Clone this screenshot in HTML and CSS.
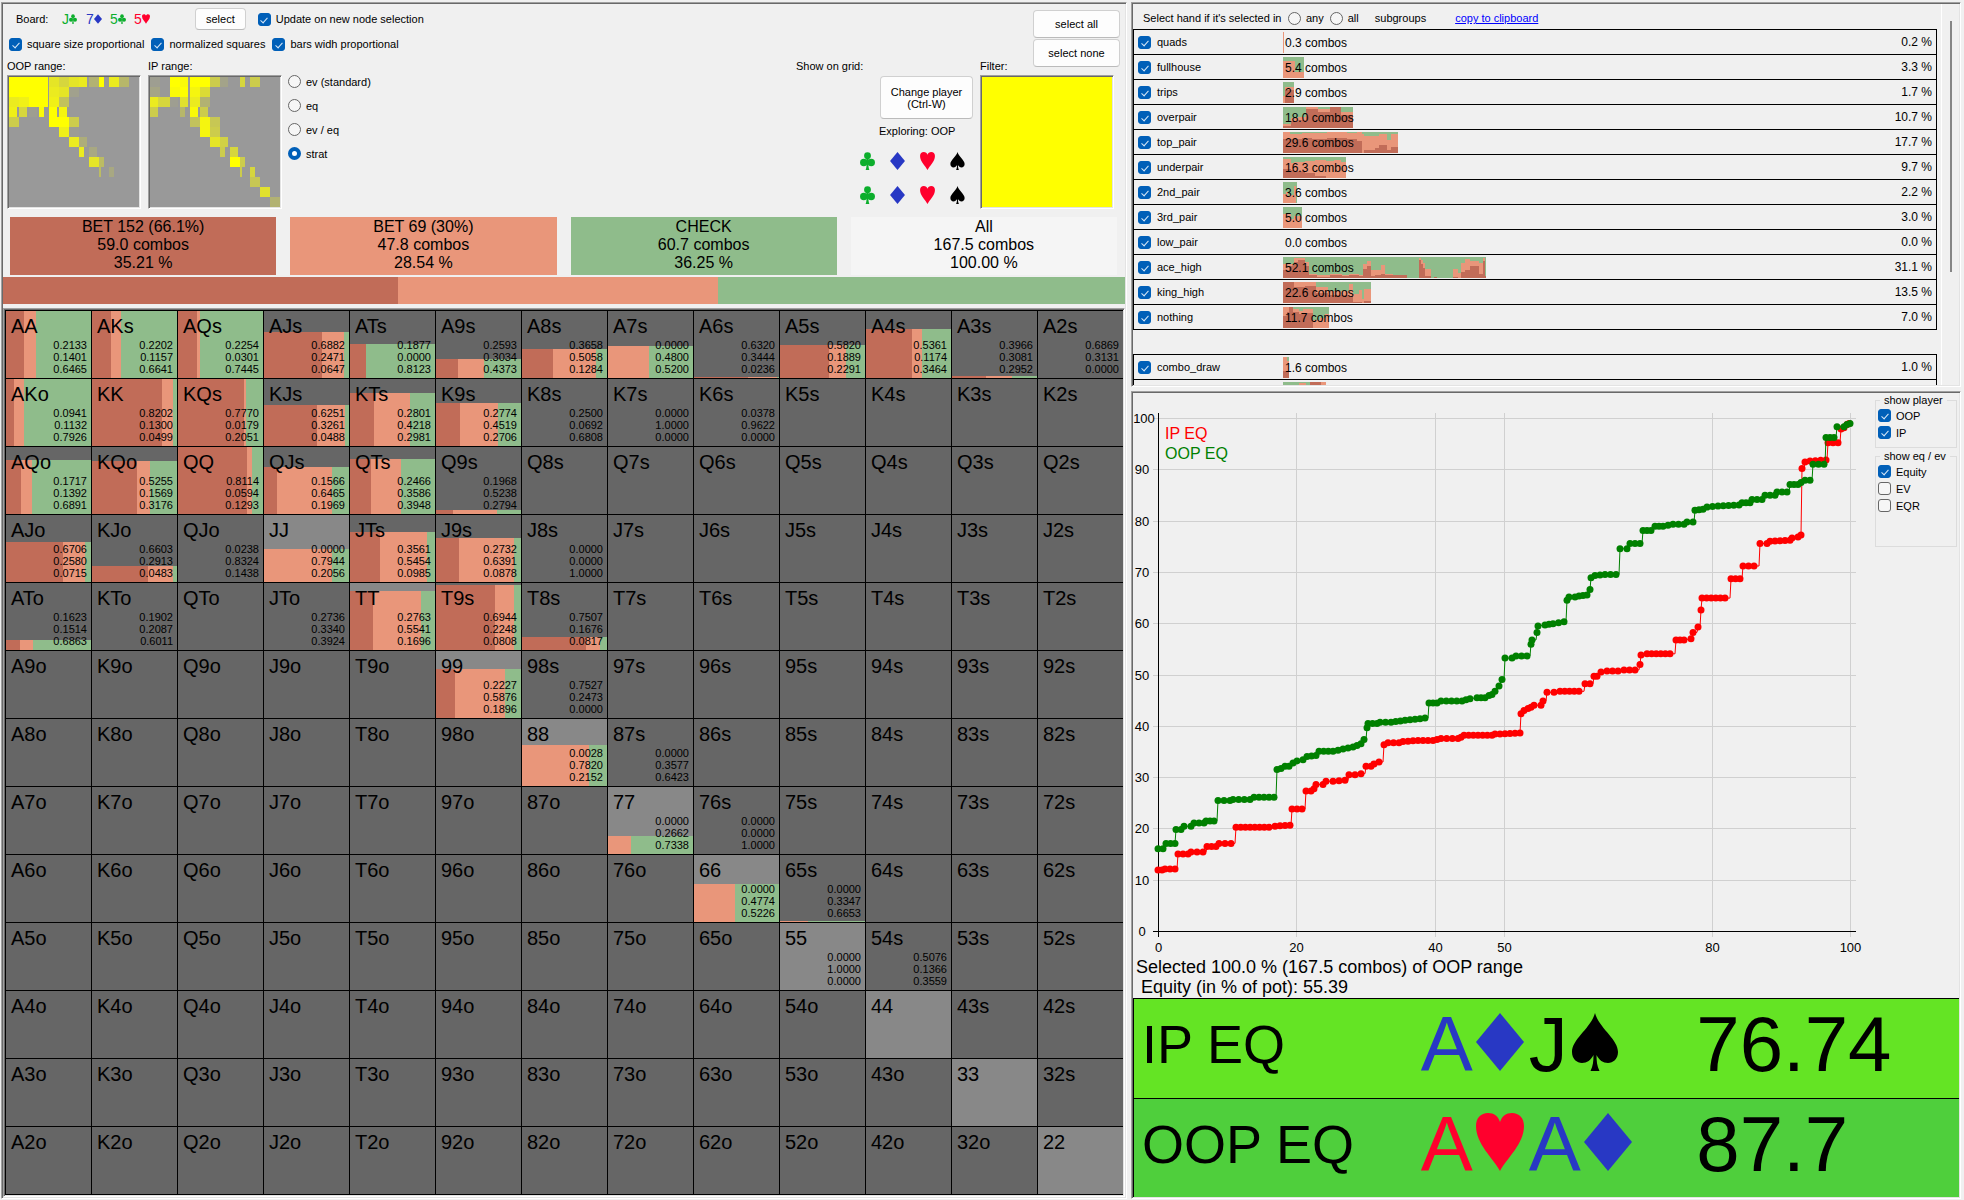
FILE: index.html
```html
<!DOCTYPE html>
<html lang="en">
<head>
<meta charset="utf-8">
<title>Range explorer</title>
<link rel="stylesheet" href="styles.css">
</head>
<body>
<svg class="symbols" aria-hidden="true">
  <symbol id="diamond" viewBox="0 0 48 58"><path d="M24 0L48 29L24 58L0 29Z"/></symbol>
  <symbol id="heart" viewBox="0 0 48 58"><path d="M24 58C17 45 0 31 0 13C0 5 5 0 12 0C18 0 22 3 24 9C26 3 30 0 36 0C43 0 48 5 48 13C48 31 31 45 24 58Z"/></symbol>
  <symbol id="spade" viewBox="0 0 48 58"><path d="M24 0C28 15 47 26 47 39C47 46 42 50 37 50C32 50 28 47 25.500 42C25.500 48 26 53 28.500 58H19.500C22 53 22.500 48 22.500 42C20 47 16 50 11 50C6 50 1 46 1 39C1 26 20 15 24 0Z"/></symbol>
  <symbol id="club" viewBox="0 0 48 58"><circle cx="24" cy="12" r="11"/><circle cx="12" cy="34" r="12"/><circle cx="36" cy="34" r="12"/><path d="M20 20H28L27 34C27 44 27 51 30 58H18C21 51 21 44 21 34Z"/></symbol>
</svg>

<main class="app">
  <section class="panel explorer">
    <div class="controls">
      <div class="setup">
        <div class="row board">
          <span class="board-label">Board:</span>
          <span class="cards">
            <span class="card club">J<svg><use href="#club"/></svg></span>
            <span class="card diamond">7<svg><use href="#diamond"/></svg></span>
            <span class="card club">5<svg><use href="#club"/></svg></span>
            <span class="card heart">5<svg><use href="#heart"/></svg></span>
          </span>
          <button type="button" class="btn">select</button>
          <label class="check"><input type="checkbox" checked>Update on new node selection</label>
        </div>
        <div class="row options">
          <label class="check"><input type="checkbox" checked>square size proportional</label>
          <label class="check"><input type="checkbox" checked>normalized squares</label>
          <label class="check"><input type="checkbox" checked>bars widh proportional</label>
        </div>
        <div class="ranges">
          <div class="range"><span>OOP range:</span><svg class="sunken mini" id="oop-range" viewBox="0 0 130 130"></svg></div>
          <div class="range"><span>IP range:</span><svg class="sunken mini" id="ip-range" viewBox="0 0 130 130"></svg></div>
          <div class="modes">
            <label class="check"><input type="radio" name="mode">ev (standard)</label>
            <label class="check"><input type="radio" name="mode">eq</label>
            <label class="check"><input type="radio" name="mode">ev / eq</label>
            <label class="check"><input type="radio" name="mode" checked>strat</label>
          </div>
        </div>
      </div>
      <div class="view">
        <div class="player">
          <span>Show on grid:</span>
          <button type="button" class="btn btn-player">Change player<br>(Ctrl-W)</button>
          <span class="exploring">Exploring: OOP</span>
          <div class="suits">
            <button type="button" class="club" aria-label="First card clubs"><svg><use href="#club"/></svg></button>
            <button type="button" class="diamond" aria-label="First card diamonds"><svg><use href="#diamond"/></svg></button>
            <button type="button" class="heart" aria-label="First card hearts"><svg><use href="#heart"/></svg></button>
            <button type="button" class="spade" aria-label="First card spades"><svg><use href="#spade"/></svg></button>
            <button type="button" class="club" aria-label="Second card clubs"><svg><use href="#club"/></svg></button>
            <button type="button" class="diamond" aria-label="Second card diamonds"><svg><use href="#diamond"/></svg></button>
            <button type="button" class="heart" aria-label="Second card hearts"><svg><use href="#heart"/></svg></button>
            <button type="button" class="spade" aria-label="Second card spades"><svg><use href="#spade"/></svg></button>
          </div>
        </div>
        <div class="filter">
          <div class="filter-head">
            <span>Filter:</span>
            <div class="filter-buttons">
              <button type="button" class="btn">select all</button>
              <button type="button" class="btn">select none</button>
            </div>
          </div>
          <div class="sunken filter-box"></div>
        </div>
      </div>
    </div>

    <div class="actions">
      <div class="action bet-big">BET 152 (66.1%)<br>59.0 combos<br>35.21 %</div>
      <div class="action bet-small">BET 69 (30%)<br>47.8 combos<br>28.54 %</div>
      <div class="action pass">CHECK<br>60.7 combos<br>36.25 %</div>
      <div class="action all">All<br>167.5 combos<br>100.00 %</div>
    </div>
    <div class="split">
      <div class="bet-big" style="width:35.21%"></div>
      <div class="bet-small" style="width:28.54%"></div>
      <div class="pass" style="width:36.25%"></div>
    </div>
    <div class="sunken matrix-frame"><table class="matrix"><tbody id="matrix"></tbody></table></div>
  </section>

  <div class="side">
    <section class="panel hands">
      <div class="hands-body">
        <div class="hands-head">
          <span>Select hand if it's selected in</span>
          <label class="check"><input type="radio" name="sub">any</label>
          <label class="check"><input type="radio" name="sub">all</label>
          <span class="subgroups">subgroups</span>
          <a href="#copy">copy to clipboard</a>
        </div>
        <table class="groups"><tbody id="made"></tbody></table>
        <table class="groups draws"><tbody id="draws"></tbody></table>
      </div>
      <div class="scrollbar"><div class="thumb"></div></div>
    </section>

    <section class="panel equity">
      <div class="chart-row">
        <svg id="chart" class="chart" viewBox="0 0 740 564" role="img" aria-label="Equity distribution"></svg>
        <div class="toggles">
          <fieldset>
            <legend>show player</legend>
            <label class="check"><input type="checkbox" checked>OOP</label>
            <label class="check"><input type="checkbox" checked>IP</label>
          </fieldset>
          <fieldset class="tall">
            <legend>show eq / ev</legend>
            <label class="check"><input type="checkbox" checked>Equity</label>
            <label class="check"><input type="checkbox">EV</label>
            <label class="check"><input type="checkbox">EQR</label>
          </fieldset>
        </div>
      </div>
      <div class="summary">
        <div>Selected 100.0 % (167.5 combos) of OOP range</div>
        <div class="summary-eq">Equity (in % of pot): 55.39</div>
      </div>
      <div class="banner ip">
        <span class="who">IP EQ</span>
        <span class="hole"><span class="diamond">A<svg><use href="#diamond"/></svg></span><span class="spade">J<svg><use href="#spade"/></svg></span></span>
        <span class="num">76.74</span>
      </div>
      <div class="banner oop">
        <span class="who">OOP EQ</span>
        <span class="hole"><span class="heart">A<svg><use href="#heart"/></svg></span><span class="diamond">A<svg><use href="#diamond"/></svg></span></span>
        <span class="num">87.7</span>
      </div>
    </section>
  </div>
</main>
<script src="app.js"></script>
</body>
</html>
```

FILE: styles.css
```css
:root {
  --face: #f0f0f0;
  --big: #c16c58;
  --small: #e9967a;
  --pass: #8fbc8b;
  --accent: #005fb8;
}

* { box-sizing: border-box; }

body {
  margin: 0;
  background: var(--face);
  color: #000;
  font: 11px/12px "Liberation Sans", Arial, sans-serif;
}

button, input { font: inherit; color: inherit; margin: 0; }

.symbols { position: absolute; width: 0; height: 0; }

.club { color: #0cae2c; }
.diamond { color: #2838c4; }
.heart { color: #ff002d; }
.spade { color: #000; }
.club svg, .diamond svg, .heart svg, .spade svg { fill: currentColor; }

.bet-big { background: var(--big); }
.bet-small { background: var(--small); }
.pass { background: var(--pass); }

.app {
  display: grid;
  grid-template-columns: 1126fr 830fr;
  gap: 4px;
  min-height: 100vh;
  padding: 2px 3px 1px 1px;
}

.panel, .sunken {
  border: 1px solid;
  border-color: #a0a0a0 #fff #fff #a0a0a0;
  box-shadow: inset 1px 1px #696969, inset -1px -1px #e3e3e3;
  padding: 1px;
}

/* form controls */
.check { display: flex; align-items: center; gap: 5px; white-space: nowrap; }

input[type="checkbox"], input[type="radio"] {
  appearance: none;
  flex: none;
  display: grid;
  place-items: center;
  width: 13px;
  height: 13px;
  border: 1px solid #666;
  border-radius: 3px;
  background: #f6f6f6;
}
input[type="checkbox"]:checked { background: var(--accent); border-color: var(--accent); }
input[type="checkbox"]:checked::after {
  content: "";
  width: 3px;
  height: 6px;
  border: solid #d8e8f8;
  border-width: 0 1px 1px 0;
  transform: rotate(42deg);
}
input[type="radio"] { border-radius: 50%; }
input[type="radio"]:checked { border: 4px solid var(--accent); background: #fff; }

.btn {
  border: 1px solid #d0d0d0;
  border-bottom-color: #bbb;
  border-radius: 4px;
  background: #fdfdfd;
  padding: 0 10px;
}

/* left side */
.explorer { display: flex; flex-direction: column; }

.controls {
  display: flex;
  justify-content: space-between;
  padding: 4px 5px 5px 4px;
}

.row { display: flex; align-items: center; }
.board { height: 22px; padding-left: 9px; }
.board-label { width: 46px; }
.cards { display: flex; margin-right: 37px; }
.card { display: flex; align-items: center; width: 24px; font-size: 14px; }
.card svg { width: 8px; height: 10px; }
.board .btn { height: 22px; margin-right: 12px; }

.options { gap: 7px; margin: 7px 0 9px; height: 14px; padding-left: 2px; }

.ranges { display: flex; gap: 6px; }
.range { display: flex; flex-direction: column; gap: 3px; }
.range + .range { margin-left: 1px; }
.mini { width: 134px; height: 134px; padding: 1px; background: #999; }
.modes { display: flex; flex-direction: column; gap: 11px; padding-top: 15px; }

.view { display: flex; gap: 7px; }
.player { display: flex; flex-direction: column; width: 177px; padding-top: 52px; }
.btn-player { align-self: flex-end; width: 93px; height: 43px; margin: 4px 0 6px; padding: 0; }
.exploring { padding-left: 83px; }
.suits {
  display: grid;
  grid-template-columns: repeat(4, 30px);
  grid-auto-rows: 34px;
  justify-content: end;
  margin-top: 7px;
  padding-right: 1px;
}
.suits button { border: 0; background: none; padding: 0; display: grid; place-items: center; }
.suits svg { width: 15px; height: 18px; }

.filter { width: 140px; padding-top: 2px; }
.filter-head { display: flex; justify-content: space-between; height: 62px; margin-bottom: 3px; }
.filter-head > span { align-self: flex-end; }
.filter-buttons { display: flex; flex-direction: column; gap: 1px; }
.filter-buttons .btn { width: 87px; height: 28px; }
.filter-box { width: 134px; height: 134px; background: #ff0; }

.actions {
  display: grid;
  grid-template-columns: repeat(4, 1fr);
  gap: 14px;
  padding: 0 8px 2px 7px;
}
.action { padding-top: 1px; height: 58px; text-align: center; font-size: 16px; line-height: 18px; }
.all { background: #f5f5f5; }

.split { display: flex; height: 27px; margin-bottom: 4px; }

.matrix-frame { flex: 1; }
.matrix {
  width: 100%;
  table-layout: fixed;
  border-spacing: 0;
  border-bottom: 1px solid #000;
}
.matrix td { padding: 0; border: solid #000; border-width: 1px 0 0 1px; }
.cell {
  display: flex;
  flex-direction: column;
  justify-content: space-between;
  height: 67px;
  padding: 4px 4px 3px 5px;
  background-color: #666;
}
.cell.pair { background-color: #888; }
.cell.played {
  background-image: linear-gradient(90deg, var(--big) var(--a), var(--small) var(--a), var(--small) var(--b), var(--pass) var(--b));
  background-position: bottom;
  background-size: 100% var(--h);
  background-repeat: no-repeat;
}
.hand { font-size: 20px; line-height: 23px; }
.freq { text-align: right; }

/* right side */
.side { display: flex; flex-direction: column; gap: 4px; }

.hands { display: flex; height: 385px; }
.hands-body { flex: 1; overflow: hidden; padding-right: 4px; border-right: 1px solid #fff; }
.hands-head { display: flex; align-items: center; height: 25px; padding: 3px 0 0 10px; }
.hands-head .check { margin-right: 6px; }
.hands-head > span:first-child { width: 145px; white-space: nowrap; }
.subgroups { margin: 0 29px 0 10px; }
.hands-head a { color: #00f; }

.groups {
  width: 100%;
  table-layout: fixed;
  border-spacing: 0;
  border: solid #000;
  border-width: 0 1px 1px;
}
.groups td { height: 25px; padding: 0; border-top: 1px solid #000; }
.groups .name { width: 149px; padding-left: 4px; }
.groups .name .check { gap: 6px; }
.groups .share { width: 80px; padding-right: 4px; text-align: right; font-size: 12px; }
.bar { display: grid; align-items: center; font-size: 12px; height: 22px; }
.bar svg, .bar span { grid-area: 1 / 1; }
.bar span { padding: 2px 0 0 2px; }
.draws { margin-top: 24px; }

.scrollbar { width: 17px; padding: 17px 0 0 8px; }
.thumb { width: 2px; height: 251px; background: #858585; }

.equity { flex: 1; display: flex; flex-direction: column; }
.chart-row { display: flex; }
.chart { flex: 1; min-width: 0; display: block; }
.chart text { font-size: 13px; text-anchor: middle; }
.chart .key { font-size: 16px; text-anchor: start; }

.toggles { width: 86px; padding: 1px 2px; }
fieldset {
  margin: 0 0 2px;
  padding: 1px 2px 0;
  height: 54px;
  border: 1px solid #dcdcdc;
}
fieldset.tall { height: 97px; }
legend { margin-left: 2px; padding: 0 4px; }
fieldset .check { height: 17px; }

.summary { padding: 0 3px 1px; font-size: 18px; line-height: 20px; }
.summary-eq { padding-left: 5px; }

.banner {
  flex: 1;
  display: grid;
  grid-template-columns: 279fr 276fr 263fr;
  align-items: center;
  padding: 0 0 8px 8px;
  border: solid #000;
  border-width: 1px 0 0 1px;
  font-size: 78px;
  line-height: 80px;
}
.ip { background: #64e424; }
.oop { background: #4fcf3c; }
.who { font-size: 54px; }
.hole svg { width: 48px; height: 58px; margin: 0 5px 0 3px; }
```

FILE: app.js
```js
const svgNS = "http://www.w3.org/2000/svg";
function draw(parent, tag, attrs, text) {
  const el = document.createElementNS(svgNS, tag);
  for (const key in attrs) el.setAttribute(key, attrs[key]);
  if (text !== undefined) el.textContent = text;
  parent.appendChild(el);
  return el;
}

/* Hand matrix: [bet big, bet small, check, fill height in px] */
const strategy = {
  AA: ["0.2133", "0.1401", "0.6465", 67], AKs: ["0.2202", "0.1157", "0.6641", 67], AQs: ["0.2254", "0.0301", "0.7445", 67],
  AJs: ["0.6882", "0.2471", "0.0647", 46], ATs: ["0.1877", "0.0000", "0.8123", 34], A9s: ["0.2593", "0.3034", "0.4373", 19],
  A8s: ["0.3658", "0.5058", "0.1284", 29], A7s: ["0.0000", "0.4800", "0.5200", 32], A6s: ["0.6320", "0.3444", "0.0236", 1],
  A5s: ["0.5820", "0.1889", "0.2291", 33], A4s: ["0.5361", "0.1174", "0.3464", 49], A3s: ["0.3966", "0.3081", "0.2952", 2],
  A2s: ["0.6869", "0.3131", "0.0000", 0],
  AKo: ["0.0941", "0.1132", "0.7926", 67], KK: ["0.8202", "0.1300", "0.0499", 67], KQs: ["0.7770", "0.0179", "0.2051", 67],
  KJs: ["0.6251", "0.3261", "0.0488", 41], KTs: ["0.2801", "0.4218", "0.2981", 53], K9s: ["0.2774", "0.4519", "0.2706", 43],
  K8s: ["0.2500", "0.0692", "0.6808", 0], K7s: ["0.0000", "1.0000", "0.0000", 0], K6s: ["0.0378", "0.9622", "0.0000", 0],
  AQo: ["0.1717", "0.1392", "0.6891", 54], KQo: ["0.5255", "0.1569", "0.3176", 53], QQ: ["0.8114", "0.0594", "0.1293", 67],
  QJs: ["0.1566", "0.6465", "0.1969", 47], QTs: ["0.2466", "0.3586", "0.3948", 55], Q9s: ["0.1968", "0.5238", "0.2794", 4],
  AJo: ["0.6706", "0.2580", "0.0715", 40], KJo: ["0.6603", "0.2913", "0.0483", 16], QJo: ["0.0238", "0.8324", "0.1438", 0],
  JJ: ["0.0000", "0.7944", "0.2056", 33], JTs: ["0.3561", "0.5454", "0.0985", 50], J9s: ["0.2732", "0.6391", "0.0878", 44],
  J8s: ["0.0000", "0.0000", "1.0000", 0],
  ATo: ["0.1623", "0.1514", "0.6863", 10], KTo: ["0.1902", "0.2087", "0.6011", 0], JTo: ["0.2736", "0.3340", "0.3924", 0],
  TT: ["0.2763", "0.5541", "0.1696", 59], T9s: ["0.6944", "0.2248", "0.0808", 65], T8s: ["0.7507", "0.1676", "0.0817", 13],
  "99": ["0.2227", "0.5876", "0.1896", 49], "98s": ["0.7527", "0.2473", "0.0000", 0],
  "88": ["0.0028", "0.7820", "0.2152", 41], "87s": ["0.0000", "0.3577", "0.6423", 0],
  "77": ["0.0000", "0.2662", "0.7338", 18], "76s": ["0.0000", "0.0000", "1.0000", 0],
  "66": ["0.0000", "0.4774", "0.5226", 38], "65s": ["0.0000", "0.3347", "0.6653", 1],
  "55": ["0.0000", "1.0000", "0.0000", 0], "54s": ["0.5076", "0.1366", "0.3559", 0]
};
const ranks = "AKQJT98765432";
document.getElementById("matrix").innerHTML = [...ranks].map((r, i) =>
  "<tr>" + [...ranks].map((c, j) => {
    const name = i === j ? r + c : i < j ? r + c + "s" : c + r + "o";
    const s = strategy[name];
    let cls = "cell" + (i === j ? " pair" : "");
    let style = "";
    if (s && s[3]) {
      const a = s[0] * 100, b = a + s[1] * 100;
      cls += " played";
      style = ` style="--a:${a.toFixed(2)}%;--b:${b.toFixed(2)}%;--h:${s[3]}px"`;
    }
    const freq = s ? `<div class="freq">${s.slice(0, 3).join("<br>")}</div>` : "";
    return `<td><div class="${cls}"${style}><div class="hand">${name}</div>${freq}</div></td>`;
  }).join("") + "</tr>").join("");

/* Range thumbnails: per row, [x, width, weight] */
const ranges = {
  "oop-range": [
    [[0, 39, 1], [40, 10, .75], [50, 10, .6], [60, 10, .75], [70, 8, .8], [80, 10, .25], [90, 5, 1], [100, 10, .8], [110, 10, .3]],
    [[0, 39, 1], [40, 10, .8], [50, 10, .75], [60, 10, .08]],
    [[0, 10, .8], [10, 10, .85], [20, 19, 1], [40, 10, .85], [50, 10, .4]],
    [[0, 8, .85], [10, 8, .6], [20, 8, .05], [30, 5, .95], [40, 8, 1], [50, 8, .9]],
    [[0, 10, .5], [40, 20, 1], [60, 10, .5]],
    [[50, 10, .85], [60, 10, .03]],
    [[60, 10, .8], [70, 8, .2]],
    [[70, 5, .8], [80, 8, .15]],
    [[80, 10, .75], [90, 5, .35]],
    [[90, 2, .35], [100, 5, .15]]
  ],
  "ip-range": [
    [[0, 10, .05], [20, 10, 1], [30, 8, .95], [40, 20, 1], [60, 10, .5], [70, 8, .1], [90, 5, .6], [100, 10, .5]],
    [[0, 10, .12], [20, 10, .95], [30, 8, 1], [40, 10, .9], [50, 10, .65]],
    [[0, 8, .8], [8, 12, .6], [20, 8, .05], [30, 8, .7], [40, 10, .8], [50, 10, .25]],
    [[0, 8, .5], [30, 5, .3], [40, 8, .95], [50, 8, .5]],
    [[40, 10, .4], [50, 10, .9], [60, 10, .45]],
    [[50, 10, .9], [60, 10, .5]],
    [[60, 10, .75], [70, 8, .55]],
    [[70, 5, .5], [80, 8, .6]],
    [[80, 10, 1], [90, 5, .5]],
    [[90, 2, .5], [100, 5, .6]],
    [[100, 10, .45]],
    [[110, 10, .7]],
    [[120, 10, .25]]
  ]
};
for (const id in ranges) {
  const svg = document.getElementById(id);
  ranges[id].forEach((row, i) => row.forEach(([x, w, o]) =>
    draw(svg, "rect", { x, y: i * 10, width: w, height: 10, fill: "#ff0", "fill-opacity": o, "shape-rendering": "crispEdges" })));
}

/* Hand groups: name, combos, share, slices of [width, bet big height, total bet height] */
const made = [
  ["quads", "0.3", "0.2", [[1, 0, 21]]],
  ["fullhouse", "5.4", "3.3", [[12, 0, 17], [9, 0, 6]]],
  ["trips", "2.9", "1.7", [[2, 0, 7], [9, 13, 16]]],
  ["overpair", "18.0", "10.7", [[8, 2, 4], [7, 7, 10], [8, 8, 11], [12, 19, 21], [12, 16, 19], [11, 21, 21], [12, 13, 16]]],
  ["top_pair", "29.6", "17.7", [[7, 14, 21], [12, 14, 19], [10, 15, 20], [15, 14, 20], [20, 15, 21], [10, 14, 20], [5, 12, 21], [2, 0, 19], [11, 3, 17], [4, 5, 17], [8, 8, 19], [4, 3, 13], [7, 6, 19]]],
  ["underpair", "16.3", "9.7", [[8, 9, 19], [3, 8, 15], [11, 7, 16], [10, 5, 17], [11, 2, 18], [8, 0, 17], [7, 0, 18], [5, 0, 16]]],
  ["2nd_pair", "3.6", "2.2", [[3, 0, 9], [2, 0, 11], [1, 0, 7], [5, 0, 8], [2, 0, 17], [1, 0, 0]]],
  ["3rd_pair", "5.0", "3.0", [[8, 0, 14], [3, 0, 9], [8, 0, 12]]],
  ["low_pair", "0.0", "0.0", []],
  ["ace_high", "52.1", "31.1", [[6, 8, 14], [5, 12, 14], [4, 16, 20], [7, 18, 20], [4, 12, 16], [8, 3, 4], [13, 1, 3], [12, 3, 4], [7, 2, 3], [10, 3, 4], [4, 2, 3], [4, 9, 14], [4, 12, 17], [4, 2, 8], [6, 3, 8], [4, 4, 13], [8, 3, 4], [14, 3, 3], [12, 0, 0], [2, 18, 20], [2, 14, 18], [2, 10, 15], [6, 2, 9], [3, 0, 0], [3, 1, 1], [16, 0, 0], [5, 1, 9], [3, 0, 5], [4, 6, 15], [5, 8, 19], [9, 12, 17], [4, 4, 15], [2, 17, 20], [1, 2, 2]]],
  ["king_high", "22.6", "13.5", [[11, 21, 21], [11, 16, 21], [11, 17, 21], [12, 10, 16], [21, 8, 12], [4, 7, 19], [6, 1, 9], [3, 1, 13], [2, 0, 4], [7, 2, 14]]],
  ["nothing", "11.7", "7.0", [[4, 12, 21], [2, 16, 21], [4, 21, 21], [6, 16, 19], [4, 14, 17], [10, 15, 19], [7, 0, 8], [5, 0, 10], [4, 0, 14]]]
];
const draws = [
  ["combo_draw", "1.6", "1.0", [[4, 7, 21], [2, 7, 17]]]
];
/* the next group only peeks in at the bottom of the list */
const peek = [[16, 0, 17], [7, 0, 20], [4, 0, 18], [11, 21, 21], [5, 18, 21]];

function bar(slices) {
  let x = 0, rects = "";
  for (const [w, big, bets] of slices) {
    rects += `<rect x="${x}" y="${21 - bets}" width="${w}" height="${bets}" fill="#e9967a"/><rect x="${x}" y="${21 - big}" width="${w}" height="${big}" fill="#c16c58"/>`;
    x += w;
  }
  return `<svg width="${x}" height="21" shape-rendering="crispEdges"><rect width="${x}" height="21" fill="#8fbc8b"/>${rects}</svg>`;
}
function groupRow([name, combos, share, slices]) {
  return `<tr><td class="name"><label class="check"><input type="checkbox" checked>${name}</label></td>` +
    `<td><div class="bar">${bar(slices)}<span>${combos} combos</span></div></td><td class="share">${share} %</td></tr>`;
}
document.getElementById("made").innerHTML = made.map(groupRow).join("");
document.getElementById("draws").innerHTML = draws.map(groupRow).join("") +
  `<tr><td class="name"></td><td><div class="bar">${bar(peek)}</div></td><td class="share"></td></tr>`;

/* Equity chart */
const chart = document.getElementById("chart");
const px = v => Math.round(25 + 6.92 * v) + .5;
const py = v => Math.round(538 - 5.13 * v) + .5;
for (let v = 0; v <= 100; v += 10) {
  if (v) draw(chart, "path", { d: `M20 ${py(v)}H723`, stroke: "#d0d0d0" });
  draw(chart, "text", { x: v === 100 ? 11 : 9, y: py(v) + 4 }, v);
}
for (const v of [0, 20, 40, 50, 80, 100]) {
  if (v) draw(chart, "path", { d: `M${px(v)} 20V544`, stroke: "#d0d0d0" });
  draw(chart, "text", { x: px(v), y: 559 }, v);
}
draw(chart, "path", { d: `M20 ${py(0)}H723M${px(0)} 20V544`, stroke: "#000" });

/* Samples: x in chart pixels, y on a 479-unit axis whose zero is at 502 */
const level = y => Math.round((538.5 - (502.3 - y) * 513 / 479) * 10) / 10;
const series = {
  "#f00": [
    [[25, 445], [29, 445], [32, 444], [42, 444]],
    [[45, 430], [55, 430], [58, 428], [70, 428]],
    [[74, 423], [83, 423], [86, 420], [98, 420]],
    [[103, 405], [136, 405], [142, 404], [157, 403]],
    [[159, 388], [169, 388]],
    [[173, 371], [178, 371], [181, 369], [183, 365], [190, 365], [193, 362], [200, 362], [212, 361]],
    [[216, 356], [222, 356], [228, 355]],
    [[233, 348], [238, 348], [241, 346], [246, 344]],
    [[251, 328], [255, 326], [266, 326], [270, 325], [285, 324], [300, 324], [308, 322], [325, 322], [328, 321], [331, 319], [359, 319], [362, 318], [387, 317]],
    [[388, 299], [391, 296], [395, 294], [398, 293], [401, 291], [408, 291], [410, 287]],
    [[414, 279], [421, 279], [427, 278], [446, 278]],
    [[452, 271], [457, 271]],
    [[461, 264], [464, 264], [468, 260], [474, 259], [485, 259], [491, 258], [502, 258]],
    [[507, 253]], [[508, 244], [514, 243], [537, 243]],
    [[543, 230], [551, 230], [558, 229]], [[560, 223]], [[565, 218]], [[568, 202]],
    [[569, 191], [592, 191]],
    [[598, 173], [607, 173]],
    [[610, 161], [621, 161]],
    [[627, 140], [634, 140], [637, 138], [657, 137], [659, 135], [665, 134], [668, 132]],
    [[669, 70]], [[672, 64], [677, 63], [693, 62]],
    [[695, 46], [705, 46]],
    [[708, 33], [711, 32], [714, 29], [716, 28]]
  ],
  "#008000": [
    [[25, 425], [30, 425], [33, 420], [42, 420]],
    [[43, 407], [48, 407], [51, 404], [58, 404], [61, 401], [71, 401], [73, 399], [81, 399]],
    [[85, 380], [97, 380], [100, 379], [117, 379], [121, 377], [141, 377]],
    [[144, 351], [148, 350], [152, 348], [156, 348], [160, 345], [164, 343], [170, 342], [174, 339], [183, 338], [186, 334], [200, 334], [210, 332], [215, 331], [220, 330], [228, 327], [231, 323]],
    [[234, 312], [235, 308], [244, 308], [247, 307], [258, 307], [272, 305], [292, 303]],
    [[296, 289], [304, 289], [308, 287], [329, 287], [337, 285], [344, 284], [352, 284], [356, 282], [359, 281], [362, 278], [366, 273], [369, 267]],
    [[372, 247], [379, 247], [383, 245], [394, 245]],
    [[398, 234], [399, 230]], [[404, 223]], [[405, 217], [412, 216], [420, 215], [431, 213]],
    [[434, 193], [436, 190], [442, 190], [446, 189], [454, 188]],
    [[457, 183]], [[458, 172], [462, 170], [472, 169], [483, 169]],
    [[487, 145], [494, 145], [497, 140], [507, 140]],
    [[510, 128], [518, 128], [522, 124], [530, 124], [540, 122], [551, 122], [554, 120], [560, 120]],
    [[562, 109], [570, 108], [574, 106], [585, 105], [606, 104], [609, 102], [617, 102], [619, 99], [629, 99], [632, 95], [642, 95], [644, 92], [654, 92]],
    [[657, 85], [665, 85], [668, 83], [672, 81], [677, 81]],
    [[680, 66], [691, 66]],
    [[693, 41], [701, 41]],
    [[704, 31], [711, 31], [714, 29], [717, 28]]
  ]
};
for (const color in series) {
  let line = "", last = null;
  const dots = [];
  for (const samples of series[color]) {
    const run = samples.map(([x, y]) => [x, level(y)]);
    line += last ? `H${run[0][0] - 1}L${run[0]}` : `M${run[0]}`;
    dots.push(run[0]);
    for (let i = 1; i < run.length; i++) {
      const [x0, y0] = run[i - 1], [x1, y1] = run[i];
      const n = Math.max(1, Math.round((x1 - x0) / 5));
      for (let k = 1; k <= n; k++) dots.push([x0 + (x1 - x0) * k / n, y0 + (y1 - y0) * k / n]);
      line += `L${run[i]}`;
    }
    last = run[run.length - 1];
  }
  draw(chart, "path", { d: line, fill: "none", stroke: color });
  for (const [cx, cy] of dots) draw(chart, "circle", { cx, cy, r: 3.5, fill: color });
}
draw(chart, "text", { class: "key", x: 32, y: 46, fill: "#f00" }, "IP EQ");
draw(chart, "text", { class: "key", x: 32, y: 66, fill: "#008000" }, "OOP EQ");
```
